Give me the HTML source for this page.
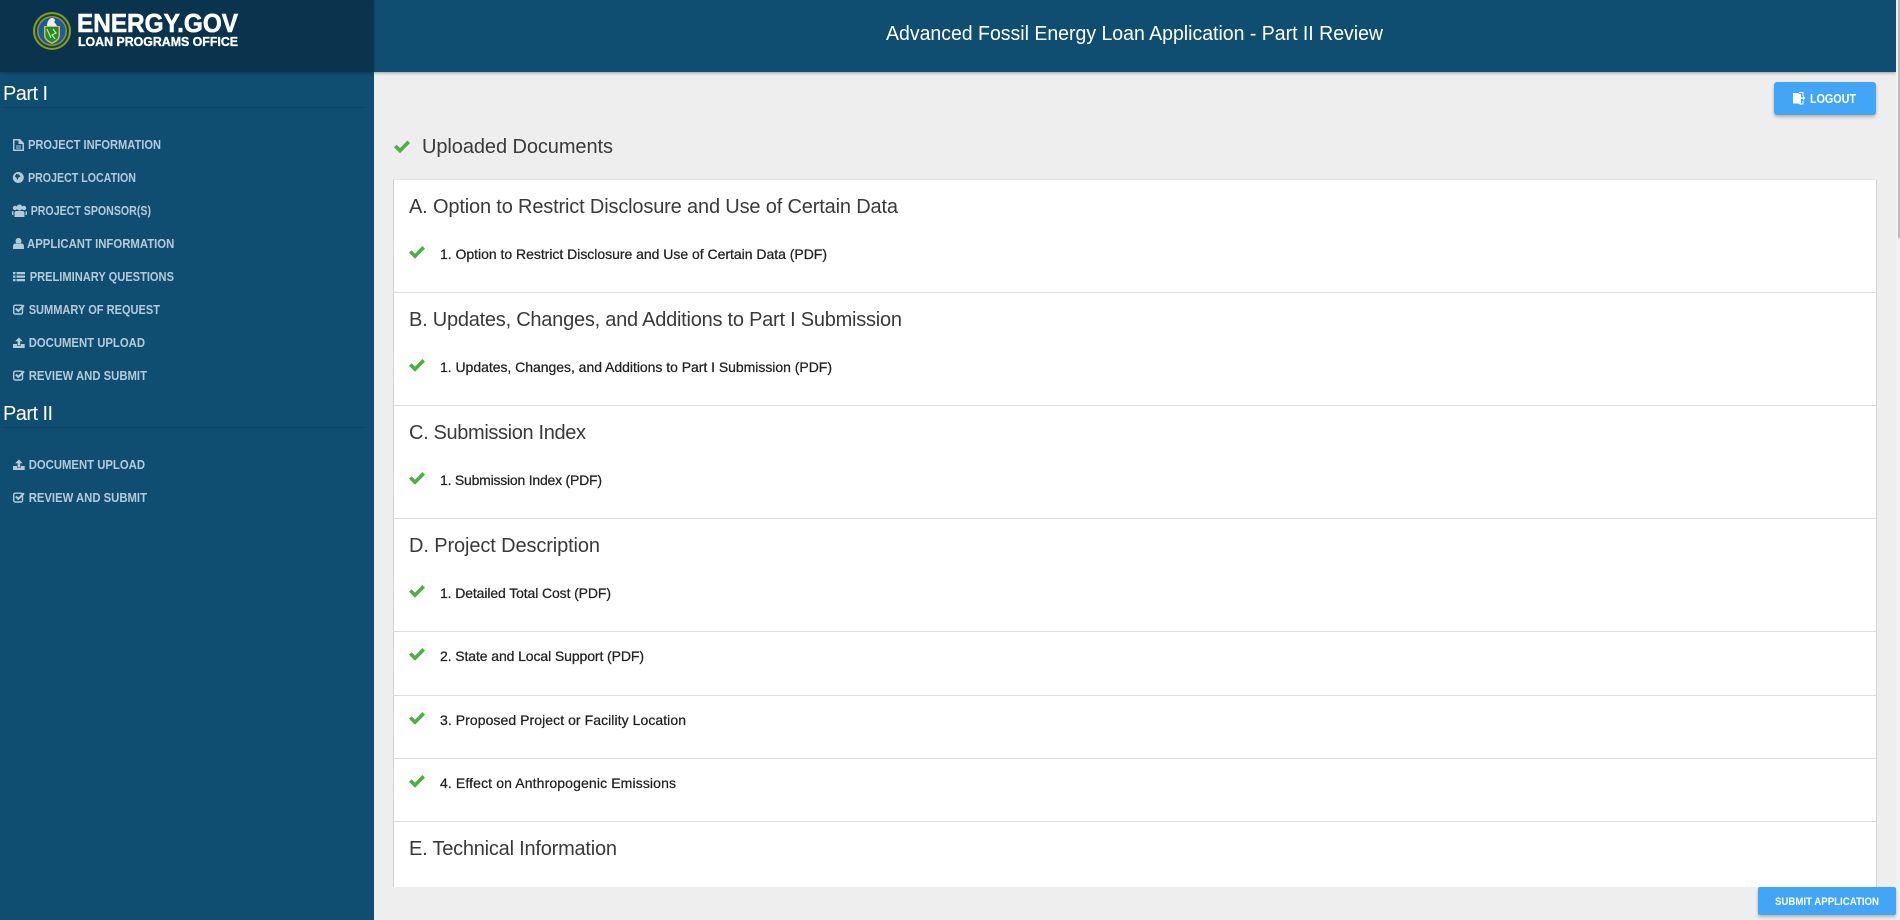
<!DOCTYPE html>
<html lang="en"><head><meta charset="utf-8"><title>Advanced Fossil Energy Loan Application - Part II Review</title>
<style>
html,body{margin:0;padding:0;width:1900px;height:920px;overflow:hidden;background:#eee}
div{position:absolute;box-sizing:border-box}
svg{position:absolute;left:0;top:0}
text{font-family:"Liberation Sans",sans-serif}
.nav{font-size:13px;font-weight:700;fill:#b5cad8}
.ic{fill:#b5cad8}
.h{font-size:20px;fill:#3a3a3a}
.it{font-size:14px;fill:#222;stroke:#222;stroke-width:.25}
.pt{font-size:20px;fill:#fff}
.ln{background:#ddd;height:1px;left:394px;width:1482px}
</style></head><body>
<div style="left:374px;top:0;width:1522px;height:72px;background:#104e71;box-shadow:0 1px 3px rgba(0,0,0,.35)"></div>
<div style="left:0;top:72px;width:374px;height:848px;background:#104e71"></div>
<div style="left:0;top:0;width:374px;height:72px;background:#0a344e;box-shadow:0 1px 3px rgba(0,0,0,.3)"></div>
<div style="left:1896px;top:0;width:4px;height:920px;background:#f1f1f1"></div>
<div style="left:1898px;top:0;width:2px;height:238px;background:#bdbdbd"></div>
<div style="left:3px;top:107px;width:361px;height:1px;background:#0d4463"></div>
<div style="left:3px;top:427px;width:361px;height:1px;background:#0d4463"></div>
<div style="left:1774px;top:82px;width:102px;height:33px;background:#42a5f5;border-radius:3px;box-shadow:0 2px 3px rgba(0,0,0,.25)"></div>
<div style="left:393px;top:179px;width:1484px;height:1px;background:#e6e6e6"></div>
<div style="left:394px;top:180px;width:1482px;height:707px;background:#fff"></div>
<div style="left:393px;top:180px;width:1px;height:707px;background:#d2d2d2"></div>
<div style="left:1876px;top:180px;width:1px;height:707px;background:#d2d2d2"></div>
<div class="ln" style="top:292px"></div><div class="ln" style="top:405px"></div><div class="ln" style="top:518px"></div><div class="ln" style="top:631px"></div><div class="ln" style="top:695px"></div><div class="ln" style="top:758px"></div><div class="ln" style="top:821px"></div>
<div style="left:1758px;top:887px;width:138px;height:28px;background:#42a5f5;border-radius:2px;box-shadow:0 2px 3px rgba(0,0,0,.25)"></div>

<svg width="1900" height="920" viewBox="0 0 1900 920">
<defs>
<path id="ck" d="M0 6.800 2.600 4.200 6 7.600 13.400 0 16 2.600 6 12.800Z" fill="#4fae45"/>
<g id="cs"><rect x="13.700" y="1.200" width="8.800" height="8.800" rx="1.500" fill="none" stroke="#b5cad8" stroke-width="1.400"/><path d="M15.800 4.500 18.300 7 24 1.300" fill="none" stroke="#b5cad8" stroke-width="2"/></g>
<g id="up" class="ic"><path d="M13 7h11.700v4H13Z"/><path d="M18.900 0 23.400 4.500h-2.900V8.500h-3.200V4.500h-2.900Z" stroke="#104e71" stroke-width=".6"/></g>
</defs>

<!-- logo -->
<circle cx="52" cy="31" r="19" fill="#8a9a2c"/>
<circle cx="52" cy="31" r="17" fill="#17472f"/>
<circle cx="52" cy="31" r="15" fill="#b8a93a" opacity=".75"/>
<circle cx="52" cy="31" r="13.500" fill="#1d5aa3"/>
<path d="M44 26h16v9c0 5-4 7-8 9-4-2-8-4-8-9Z" fill="#d4be3c"/>
<path d="M45.500 27h13v8c0 4-3 5.500-6.500 7.500-3.500-2-6.500-3.500-6.500-7.500Z" fill="#1d8a3e"/>
<path d="M47 29 51 38M53 29 56 33 52 35 55 39" stroke="#e8e26a" stroke-width="1.200" fill="none"/>
<path d="M47 26c0-4 2-8 5-8 2 0 3 1 3 3l-1 1c1 1 2 2 3 4Z" fill="#e9edf0"/>
<text x="77" y="32" font-size="26" font-weight="700" fill="#fff" stroke="#fff" stroke-width=".6" textLength="161" lengthAdjust="spacingAndGlyphs">ENERGY.GOV</text>
<text x="78" y="46" font-size="13" font-weight="700" fill="#fff" stroke="#fff" stroke-width=".35" textLength="160" lengthAdjust="spacingAndGlyphs">LOAN PROGRAMS OFFICE</text>

<text x="886" y="40" font-size="20" fill="#fff" textLength="497" lengthAdjust="spacingAndGlyphs">Advanced Fossil Energy Loan Application - Part II Review</text>

<text class="pt" x="3" y="100" textLength="45">Part I</text>
<text class="pt" x="3" y="420" textLength="50">Part II</text>

<!-- nav icons -->
<path class="ic" fill-rule="evenodd" d="M13 139h7l4 4v8H13ZM14.500 140.500v9h8v-5.500h-4v-3.500ZM16 145.500h5v1h-5ZM16 147.500h5v1h-5Z"/>
<path class="ic" fill-rule="evenodd" d="M18.300 172a5.500 5.500 0 1 0 .01 0ZM16 174l3 .5 1.500 2-2 1-1 2.500-1-2-1.500-1.500Z"/>
<g class="ic">
<circle cx="19.500" cy="207.500" r="3"/><circle cx="15" cy="208" r="2.200"/><circle cx="24" cy="208" r="2.200"/>
<path d="M16.500 211h6c1.200 0 2 .8 2 2.200V217h-10v-3.800c0-1.400.8-2.200 2-2.200ZM13.500 211v4H13c-.6 0-1.000-.4-1.000-1v-1.500c0-1 .5-1.500 1.500-1.500ZM25.500 211c1 0 1.500.5 1.500 1.500V214c0 .6-.4 1-1 1h-.5Z"/>
</g>
<path class="ic" d="M18.500 238a3 3 0 1 0 .01 0ZM15.500 243.500h6c1.500 0 2.500 1.200 2.500 3v2.500H13v-2.500c0-1.800 1-3 2.500-3Z"/>
<path class="ic" d="M13 272h2.500v2.200H13ZM16.500 272h8.500v2.200h-8.500ZM13 275.500h2.500v2.200H13ZM16.500 275.500h8.500v2.200h-8.500ZM13 279h2.500v2.200H13ZM16.500 279h8.500v2.200h-8.500Z"/>
<use href="#cs" y="304"/>
<use href="#up" y="337"/>
<use href="#cs" y="370"/>
<use href="#up" y="459"/>
<use href="#cs" y="492"/>

<text class="nav" x="28" y="149" textLength="133" lengthAdjust="spacingAndGlyphs">PROJECT INFORMATION</text>
<text class="nav" x="28" y="182" textLength="108" lengthAdjust="spacingAndGlyphs">PROJECT LOCATION</text>
<text class="nav" x="30.700" y="215" textLength="120.300" lengthAdjust="spacingAndGlyphs">PROJECT SPONSOR(S)</text>
<text class="nav" x="27" y="248" textLength="147.300" lengthAdjust="spacingAndGlyphs">APPLICANT INFORMATION</text>
<text class="nav" x="29.700" y="281" textLength="144.300" lengthAdjust="spacingAndGlyphs">PRELIMINARY QUESTIONS</text>
<text class="nav" x="28.700" y="314" textLength="131.300" lengthAdjust="spacingAndGlyphs">SUMMARY OF REQUEST</text>
<text class="nav" x="28.700" y="347" textLength="116.300" lengthAdjust="spacingAndGlyphs">DOCUMENT UPLOAD</text>
<text class="nav" x="28.700" y="380" textLength="118.300" lengthAdjust="spacingAndGlyphs">REVIEW AND SUBMIT</text>
<text class="nav" x="28.700" y="469" textLength="116.300" lengthAdjust="spacingAndGlyphs">DOCUMENT UPLOAD</text>
<text class="nav" x="28.700" y="502" textLength="118.300" lengthAdjust="spacingAndGlyphs">REVIEW AND SUBMIT</text>

<!-- logout -->
<path fill="#fff" d="M1793 93h5l3 1.500v10.500l-3-1.500h-5Z"/>
<path fill="#fff" d="M1799 92h4.500v4h-1v-3h-3.500ZM1803 97.500v-1.700l2.300 2.400-2.300 2.400v-1.700h-2v-1.400ZM1802.500 101h1v3.500h-2.500v-1h1.500Z"/>
<text x="1810" y="103" font-size="13" font-weight="700" fill="#fff" textLength="46" lengthAdjust="spacingAndGlyphs">LOGOUT</text>

<use href="#ck" x="394" y="140.500"/>
<text class="h" x="422" y="153" textLength="191">Uploaded Documents</text>

<text class="h" x="409" y="213" textLength="489">A. Option to Restrict Disclosure and Use of Certain Data</text>
<use href="#ck" x="409" y="246"/>
<text class="it" x="440" y="259" textLength="387">1. Option to Restrict Disclosure and Use of Certain Data (PDF)</text>

<text class="h" x="409" y="326" textLength="493">B. Updates, Changes, and Additions to Part I Submission</text>
<use href="#ck" x="409" y="359"/>
<text class="it" x="440" y="372" textLength="392">1. Updates, Changes, and Additions to Part I Submission (PDF)</text>

<text class="h" x="409" y="439" textLength="177">C. Submission Index</text>
<use href="#ck" x="409" y="472"/>
<text class="it" x="440" y="485" textLength="162">1. Submission Index (PDF)</text>

<text class="h" x="409" y="552" textLength="191">D. Project Description</text>
<use href="#ck" x="409" y="585"/>
<text class="it" x="440" y="598" textLength="171">1. Detailed Total Cost (PDF)</text>

<use href="#ck" x="409" y="648"/>
<text class="it" x="440" y="661" textLength="204">2. State and Local Support (PDF)</text>
<use href="#ck" x="409" y="712"/>
<text class="it" x="440" y="725" textLength="246">3. Proposed Project or Facility Location</text>
<use href="#ck" x="409" y="775"/>
<text class="it" x="440" y="788" textLength="236">4. Effect on Anthropogenic Emissions</text>

<text class="h" x="409" y="855" textLength="208">E. Technical Information</text>

<text x="1775" y="905" font-size="11" font-weight="700" fill="#fff" textLength="104" lengthAdjust="spacingAndGlyphs">SUBMIT APPLICATION</text>
</svg>
</body></html>
